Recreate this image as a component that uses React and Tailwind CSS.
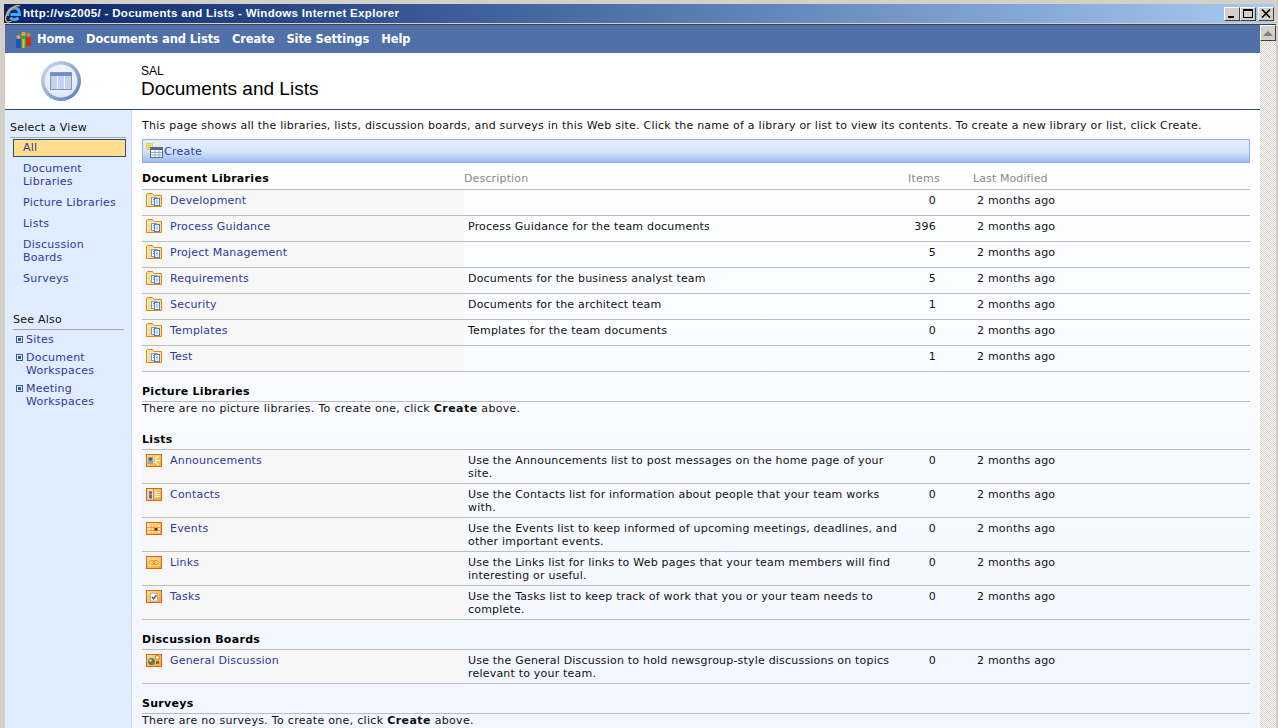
import React from 'react';

const Folder = () => (
  <svg width="16" height="14" viewBox="0 0 16 14" className="shrink-0 block">
    <path d="M0.5 13.5V1.5L1.5 0.5H6.5L8 2.5H15.5V13.5Z" fill="#ffdc88" stroke="#e08418" />
    <path d="M1.5 12.5V3.5H14.5" fill="none" stroke="#fff3c4" />
    <rect x="5.5" y="4.5" width="5" height="7" fill="#fff" stroke="#6a98dc" />
    <rect x="8.5" y="5.5" width="5" height="7" fill="#fff" stroke="#4a7fd0" />
    <path d="M7 6.5H8M7 8.5H8M10 8H12M10 10H12" stroke="#6a98dc" />
  </svg>
);

const ListIcon = ({ type }) => (
  <svg width="16" height="13" viewBox="0 0 16 13" className="shrink-0 block">
    <defs>
      <linearGradient id="tile" x1="0" y1="0" x2="1" y2="1">
        <stop offset="0" stopColor="#ffe08c" />
        <stop offset="1" stopColor="#f9a532" />
      </linearGradient>
    </defs>
    <rect x="0.5" y="0.5" width="15" height="12" fill="url(#tile)" stroke="#d9661a" />
    {type === 'announce' && (
      <>
        <rect x="2" y="3" width="5" height="7" fill="#8fa3bf" />
        <circle cx="4.5" cy="5" r="1.5" fill="#3d5070" />
        <path d="M9 5L13 2M9 6.5H14M9 8L13 11" stroke="#fff" strokeWidth="1.1" />
      </>
    )}
    {type === 'contacts' && (
      <>
        <rect x="2" y="2" width="5" height="9" fill="#d0dcf0" />
        <circle cx="4.5" cy="4.5" r="1.5" fill="#7a6040" />
        <rect x="3" y="6.5" width="3" height="4" fill="#5570a0" />
        <path d="M7.5 1V12" stroke="#e8842a" />
        <path d="M9 4.5H14M9 6.5H14M9 8.5H14" stroke="#fff" />
      </>
    )}
    {type === 'events' && (
      <>
        <rect x="2" y="3" width="12" height="8" fill="#ffeeb4" />
        <path d="M2 5.5H14M2 8.5H14M5 3V11M8 3V11M11 3V11" stroke="#f09a30" />
        <rect x="8.5" y="6" width="3" height="2.5" fill="#7a1c00" />
      </>
    )}
    {type === 'links' && (
      <>
        <rect x="2" y="3" width="12" height="7" fill="#ffd98c" />
        <ellipse cx="6" cy="6.5" rx="3" ry="2" fill="none" stroke="#ee8f2c" />
        <ellipse cx="10" cy="6.5" rx="3" ry="2" fill="none" stroke="#ee8f2c" />
      </>
    )}
    {type === 'tasks' && (
      <>
        <rect x="4.5" y="3.5" width="7" height="7.5" fill="#fff" stroke="#c0b290" />
        <rect x="6.5" y="2" width="3" height="2" fill="#d9c58a" />
        <path d="M6 7L7.5 9L10.5 5" fill="none" stroke="#2a4fc0" strokeWidth="1.3" />
      </>
    )}
    {type === 'discussion' && (
      <>
        <circle cx="5.5" cy="7.5" r="3.5" fill="#5c7a66" />
        <circle cx="4.5" cy="6.5" r="1.2" fill="#c7d6e0" />
        <circle cx="7.5" cy="9.5" r="1" fill="#3bb04a" />
        <circle cx="11.5" cy="3.5" r="2" fill="#fff" stroke="#d9661a" />
        <rect x="10" y="7" width="3" height="3" fill="#a05a2a" />
      </>
    )}
  </svg>
);

const IeLogo = () => (
  <svg width="18" height="20" viewBox="0 0 18 20" className="shrink-0">
    <path d="M3.5 12C3.5 7 7 4 10.5 4C14 4 15.5 7 15.5 10.5H6.5M6.5 13.5C7.5 16 11 16.5 14.5 14" fill="none" stroke="#4aa8ee" strokeWidth="3" />
    <path d="M16 2C12.5 0 4 5 2 12C0.5 17 3 19.5 7.5 17" fill="none" stroke="#e9b23a" strokeWidth="1.4" />
  </svg>
);

const TeamIcon = () => (
  <svg width="17" height="18" viewBox="0 0 17 18" className="shrink-0">
    <circle cx="3.5" cy="6" r="2" fill="#e8a040" />
    <rect x="1" y="8" width="5" height="9" rx="1" fill="#2450c8" />
    <circle cx="8.5" cy="3" r="2.2" fill="#e0b020" />
    <rect x="6" y="5.5" width="5" height="11.5" rx="1" fill="#2fa83a" />
    <rect x="7.5" y="8" width="2" height="9" fill="#f2c020" />
    <circle cx="13.5" cy="4" r="2" fill="#d88030" />
    <rect x="11" y="6" width="5" height="9" rx="1" fill="#d82818" />
  </svg>
);

const PageLogo = () => (
  <svg width="42" height="42" viewBox="0 0 42 42">
    <defs>
      <linearGradient id="ring" x1="0" y1="0" x2="1" y2="1">
        <stop offset="0" stopColor="#d5e0f2" />
        <stop offset="1" stopColor="#4f78b8" />
      </linearGradient>
      <radialGradient id="disc" cx="0.5" cy="0.4" r="0.6">
        <stop offset="0" stopColor="#ffffff" />
        <stop offset="1" stopColor="#dde6f5" />
      </radialGradient>
    </defs>
    <circle cx="21" cy="21" r="20" fill="url(#ring)" />
    <circle cx="21" cy="21" r="16.5" fill="url(#disc)" />
    <rect x="10.5" y="12.5" width="21" height="17" fill="#c4d3ec" stroke="#7d96c4" />
    <rect x="11" y="13" width="20" height="3" fill="#6b8fcb" />
    <path d="M17.5 16V29M24.5 16V29" stroke="#f4f7fc" />
  </svg>
);

const CreateIcon = () => (
  <svg width="17" height="16" viewBox="0 0 17 16" className="shrink-0 -mt-[3px]">
    <rect x="0" y="0" width="7" height="7" fill="#e2d050" />
    <path d="M1 1.5H2M3 1.5H4M5 1.5H6M1 3.5H2M5 3.5H6M1 5.5H2M3 5.5H4" stroke="#fff6b0" />
    <rect x="4.5" y="4.5" width="12" height="10" fill="#fff" stroke="#5a6a88" />
    <rect x="5" y="5" width="11" height="2" fill="#56688c" />
    <path d="M5 9.5H16M5 12H16M9 7V14M13 7V14" stroke="#9aa8c4" />
  </svg>
);

const WinButton = ({ children }) => (
  <div className="w-[16px] h-[14px] bg-[#d4d0c8] border border-t-white border-l-white border-r-[#404040] border-b-[#404040] flex items-center justify-center">
    {children}
  </div>
);

const SideLink = ({ children, className = '' }) => (
  <a className={`block text-[#2e3a9c] leading-[13px] ${className}`}>{children}</a>
);

const Plus = () => (
  <span className="w-[7px] h-[7px] border border-[#3a5a94] flex items-center justify-center shrink-0 mt-[3px]">
    <span className="w-[3px] h-[3px] bg-[#3a5a94]" />
  </span>
);

const Row = ({ icon, name, desc, items, h = 'h-[26px]', iconClass = 'mt-0' }) => (
  <div className={`grid grid-cols-[322px_436px_36px_1fr] ${h} border-b border-[#bdbdbd]`}>
    <div className="bg-[#f7f7f7] flex items-start pl-[4px] pt-[4px] gap-[8px]">
      <span className={iconClass}>{icon}</span>
      <a className="text-[#2e3a9c] leading-[13px] tracking-[0.2px]">{name}</a>
    </div>
    <div className="pl-[4px] pt-[4px] leading-[13px] text-[#111] tracking-[0.2px]">{desc}</div>
    <div className="pt-[4px] leading-[13px] text-right text-[#111]">{items}</div>
    <div className="pl-[41px] pt-[4px] leading-[13px] text-[#111] tracking-[0.2px]">2 months ago</div>
  </div>
);

const SectionTitle = ({ children, className = '' }) => (
  <div className={`font-bold text-black leading-[13px] tracking-[0.3px] border-b border-[#bdbdbd] pb-[3px] ${className}`}>{children}</div>
);

const docLibs = [
  ['Development', '', 0],
  ['Process Guidance', 'Process Guidance for the team documents', 396],
  ['Project Management', '', 5],
  ['Requirements', 'Documents for the business analyst team', 5],
  ['Security', 'Documents for the architect team', 1],
  ['Templates', 'Templates for the team documents', 0],
  ['Test', '', 1],
];

const lists = [
  ['announce', 'Announcements', 'Use the Announcements list to post messages on the home page of your site.'],
  ['contacts', 'Contacts', 'Use the Contacts list for information about people that your team works with.'],
  ['events', 'Events', 'Use the Events list to keep informed of upcoming meetings, deadlines, and other important events.'],
  ['links', 'Links', 'Use the Links list for links to Web pages that your team members will find interesting or useful.'],
  ['tasks', 'Tasks', 'Use the Tasks list to keep track of work that you or your team needs to complete.'],
];

export default function App() {
  return (
    <div className="w-[1278px] h-[728px] overflow-hidden bg-[#d4d0c8] flex flex-col text-[11px] tracking-[0.24px] font-['DejaVu_Sans','Liberation_Sans',sans-serif]">
      {/* Title bar */}
      <div className="h-[23px] mt-[1px] mx-[1px] shrink-0 pt-[3px] pb-[1px] px-[3px]">
        <div className="h-[19px] bg-gradient-to-r from-[#0a246a] to-[#a6caf0] flex items-center justify-between">
          <div className="flex items-center gap-[1px] text-white font-bold">
            <IeLogo />
            <span className="font-['Liberation_Sans','DejaVu_Sans',sans-serif] text-[11.5px] tracking-[0.32px]">http://vs2005/ - Documents and Lists - Windows Internet Explorer</span>
          </div>
          <div className="flex items-center">
            <WinButton><span className="w-[6px] h-[2px] bg-black mt-[6px] mr-[2px]" /></WinButton>
            <WinButton><span className="w-[10px] h-[9px] border border-black border-t-2" /></WinButton>
            <div className="w-[2px]" />
            <WinButton>
              <svg width="10" height="9" viewBox="0 0 10 9"><path d="M1 0.5L9 8.5M9 0.5L1 8.5" stroke="#000" strokeWidth="1.6" /></svg>
            </WinButton>
          </div>
        </div>
      </div>

      <div className="flex flex-1 min-h-0 pl-[5px] pr-[2px]">
        <div className="flex-1 min-w-0 flex flex-col border-t border-[#404040]">
          {/* Top nav */}
          <div className="h-[28px] shrink-0 bg-[#5070aa] flex items-center pl-[10px] pt-[1px] text-white font-bold text-[11.5px] tracking-[-0.08px] gap-[12px]">
            <span className="flex items-center gap-[5px]"><TeamIcon />Home</span>
            <span>Documents and Lists</span>
            <span>Create</span>
            <span>Site Settings</span>
            <span>Help</span>
          </div>

          {/* Page header */}
          <div className="h-[57px] shrink-0 bg-white border-b border-[#2f4a80] flex items-center tracking-normal font-['Liberation_Sans',sans-serif]">
            <div className="w-[136px] flex justify-center pr-[25px] -mt-[1px]"><PageLogo /></div>
            <div className="pt-[1px]">
              <div className="text-[12px] leading-[14px] text-black">SAL</div>
              <div className="text-[19px] leading-[22px] text-black">Documents and Lists</div>
            </div>
          </div>

          <div className="flex flex-1 min-h-0">
            {/* Sidebar */}
            <div className="w-[127px] shrink-0 bg-[#e0ecff] border-r border-[#c9d8ef] pl-[5px] pr-[5px] pt-[11px]">
              <div className="leading-[13px] text-[#111] border-b border-[#a8a8a8] pb-[3px]">Select a View</div>
              <div className="mt-[1px] ml-[3px] h-[18px] bg-[#ffdd8c] border border-[#2d4a86] pl-[9px] flex items-center text-[#2e3a9c]">All</div>
              <div className="pl-[13px] pt-[5px] flex flex-col gap-[8px]">
                <SideLink>Document<br />Libraries</SideLink>
                <SideLink>Picture Libraries</SideLink>
                <SideLink>Lists</SideLink>
                <SideLink>Discussion<br />Boards</SideLink>
                <SideLink>Surveys</SideLink>
              </div>
              <div className="mt-[28px] ml-[3px] mr-[2px] leading-[13px] text-[#111] border-b border-[#a8a8a8] pb-[3px]">See Also</div>
              <div className="ml-[6px] pt-[3px] flex flex-col gap-[5px]">
                <div className="flex gap-[3px] items-start"><Plus /><SideLink>Sites</SideLink></div>
                <div className="flex gap-[3px] items-start"><Plus /><SideLink>Document<br />Workspaces</SideLink></div>
                <div className="flex gap-[3px] items-start"><Plus /><SideLink>Meeting<br />Workspaces</SideLink></div>
              </div>
            </div>

            {/* Main content */}
            <div className="flex-1 min-w-0 bg-gradient-to-b from-white to-[#f2f6ff] pl-[10px] pr-[10px] pt-[9px] overflow-hidden">
              <div className="leading-[13px] text-[#111] whitespace-nowrap">
                This page shows all the libraries, lists, discussion boards, and surveys in this Web site. Click the name of a library or list to view its contents. To create a new library or list, click Create.
              </div>
              <div className="mt-[7px] h-[24px] border border-[#8fb0ef] bg-gradient-to-b from-[#e4eeff] via-[#d8e6fd] to-[#9dbcf2] flex items-center pl-[3px] pt-[2px] gap-[1px] text-[#2e3a9c]">
                <CreateIcon />Create
              </div>

              <div className="grid grid-cols-[322px_436px_36px_1fr] mt-[9px] border-b border-[#bdbdbd] pb-[4px] leading-[13px]">
                <div className="font-bold text-black tracking-[0.3px]">Document Libraries</div>
                <div className="text-[#8a8a8a] tracking-[0.15px]">Description</div>
                <div className="text-[#8a8a8a] text-right relative left-[4px]">Items</div>
                <div className="text-[#8a8a8a] pl-[37px] tracking-[0.1px]">Last Modified</div>
              </div>
              {docLibs.map(([name, desc, items]) => (
                <Row key={name} iconClass="-mt-[1px]" icon={<Folder />} name={name} desc={desc} items={items} />
              ))}

              <SectionTitle className="mt-[13px]">Picture Libraries</SectionTitle>
              <div className="leading-[13px] text-[#111] tracking-[0.3px]">
                There are no picture libraries. To create one, click <b className="tracking-[0.45px]">Create</b> above.
              </div>

              <SectionTitle className="mt-[18px]">Lists</SectionTitle>
              {lists.map(([type, name, desc]) => (
                <Row key={name} h="h-[34px]" icon={<ListIcon type={type} />} name={name} desc={desc} items={0} />
              ))}

              <SectionTitle className="mt-[13px]">Discussion Boards</SectionTitle>
              <Row
                h="h-[34px]"
                icon={<ListIcon type="discussion" />}
                name="General Discussion"
                desc="Use the General Discussion to hold newsgroup-style discussions on topics relevant to your team."
                items={0}
              />

              <SectionTitle className="mt-[13px]">Surveys</SectionTitle>
              <div className="leading-[13px] text-[#111] tracking-[0.3px]">
                There are no surveys. To create one, click <b className="tracking-[0.45px]">Create</b> above.
              </div>
            </div>
          </div>
        </div>

        {/* Scrollbar */}
        <div className="w-[16px] shrink-0 bg-[repeating-conic-gradient(#d4d0c8_0%_25%,#ffffff_0%_50%)] bg-[length:2px_2px] border-t border-[#404040]">
          <div className="w-[16px] h-[16px] bg-[#d4d0c8] border border-t-white border-l-white border-r-[#404040] border-b-[#404040] flex items-center justify-center">
            <span className="w-0 h-0 border-l-[5px] border-r-[5px] border-b-[5px] border-l-transparent border-r-transparent border-b-[#808080]" />
          </div>
        </div>
      </div>
    </div>
  );
}
